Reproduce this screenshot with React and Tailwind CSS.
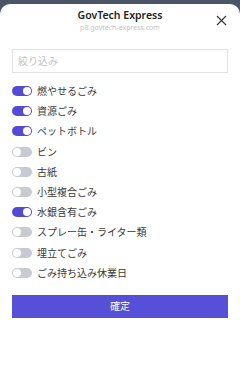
import React, { useState } from "react"

const ITEMS = [
    { label: "燃やせるごみ", on: true },
    { label: "資源ごみ", on: true },
    { label: "ペットボトル", on: true },
    { label: "ビン", on: false },
    { label: "古紙", on: false },
    { label: "小型複合ごみ", on: false },
    { label: "水銀含有ごみ", on: true },
    { label: "スプレー缶・ライター類", on: false },
    { label: "埋立てごみ", on: false },
    { label: "ごみ持ち込み休業日", on: false },
]

function Toggle({ on, onClick }) {
    return (
        <button
            onClick={onClick}
            className={`relative w-[20px] h-[10px] rounded-full shrink-0 ${on ? "bg-[#5549d8]" : "bg-[#c7cad3]"}`}
        >
            <span
                className={`absolute top-[1px] w-[8px] h-[8px] rounded-full bg-white ${on ? "left-[11px]" : "left-[1px]"}`}
            />
        </button>
    )
}

export default function App() {
    const [items, setItems] = useState(ITEMS)

    return (
        <div className="w-[240px] h-[369px] bg-[#4b5567] pt-[4px]" style={{ fontFamily: '"Noto Sans", "Noto Sans CJK JP", sans-serif' }}>
            <div className="h-[365px] bg-white rounded-t-[10px] px-[12px]">
                {/* Header */}
                <div className="relative flex flex-col items-center pt-[4px] h-[43px]">
                    <div className="text-[10.5px] font-semibold leading-[15px] text-[#222]">GovTech Express</div>
                    <div className="text-[7px] leading-[9px] text-[#c4c4c4]">p8.govtech-express.com</div>
                    <svg className="absolute right-[1px] top-[11px]" width="11" height="11" viewBox="0 0 11 11">
                        <path d="M1 1L10 10M10 1L1 10" stroke="#333" strokeWidth="1.1" />
                    </svg>
                </div>

                {/* Filter */}
                <input
                    placeholder="絞り込み"
                    className="w-full h-[24px] border border-[#e2e2e2] px-[5px] text-[10px] text-[#333] placeholder:text-[#c2c2c2] outline-none"
                />

                {/* Toggles */}
                <div className="flex flex-col mt-[8px]">
                    {items.map((item, i) => (
                        <div key={item.label} className="flex items-center gap-[5px] h-[20.2px]">
                            <Toggle
                                on={item.on}
                                onClick={() => setItems(items.map((it, j) => (j === i ? { ...it, on: !it.on } : it)))}
                            />
                            <span className="text-[10px] text-[#3a3a3a] leading-none">{item.label}</span>
                        </div>
                    ))}
                </div>

                <button className="w-full h-[23px] mt-[12px] bg-[#5650d8] text-white text-[10px]">確定</button>
            </div>
        </div>
    )
}
